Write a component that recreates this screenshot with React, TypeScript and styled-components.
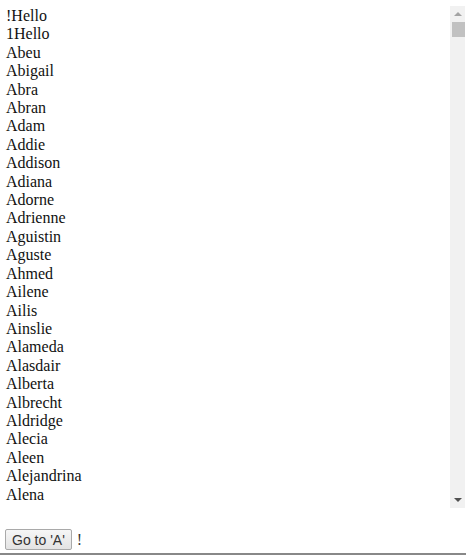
import React from 'react'
import styled, { createGlobalStyle } from 'styled-components'

const GlobalStyle = createGlobalStyle`
    html, body {
        margin: 0;
        padding: 0;
        background: #fff;
    }
    body {
        font-family: "Liberation Serif", "Times New Roman", serif;
        font-size: 16px;
        color: #000;
    }
`

const Page = styled.div`
    width: 466px;
    padding-top: 6px;
    display: flex;
    flex-direction: column;
`

const ListBox = styled.div`
    display: flex;
    height: 502px;
    padding-right: 1px;
`

const NameList = styled.div`
    flex: 1;
    overflow: hidden;
    padding: 1px 0 0 6px;
    box-sizing: border-box;
`

const NameRow = styled.div`
    line-height: 18.4px;
    white-space: nowrap;
    color: #111;
`

const Scrollbar = styled.div`
    width: 15px;
    background: #f1f1f1;
    display: flex;
    flex-direction: column;
`

const ArrowButton = styled.div`
    height: 16px;
    display: flex;
    align-items: center;
    justify-content: center;
`

const Thumb = styled.div`
    height: 15px;
    margin-left: 2px;
    background: #c1c1c1;
`

const TrackRest = styled.div`
    flex: 1;
`

const Footer = styled.div`
    display: flex;
    align-items: center;
    gap: 5px;
    padding: 21px 0 0 5px;
`

const GoButton = styled.button`
    font-family: "Liberation Sans", Arial, sans-serif;
    font-size: 14px;
    color: #333;
    height: 21px;
    padding: 1px 6px;
    border: 1px solid #a9a9a9;
    border-radius: 2px;
    background: linear-gradient(#f6f6f6, #e3e3e3);
    cursor: pointer;
`

const Bang = styled.span`
    font-size: 16px;
    line-height: 18px;
    color: #333;
`

const BottomRule = styled.div`
    margin-top: 3px;
    height: 2px;
    background: #888;
`

const names = [
    '!Hello', '1Hello', 'Abeu', 'Abigail', 'Abra', 'Abran', 'Adam', 'Addie',
    'Addison', 'Adiana', 'Adorne', 'Adrienne', 'Aguistin', 'Aguste', 'Ahmed',
    'Ailene', 'Ailis', 'Ainslie', 'Alameda', 'Alasdair', 'Alberta', 'Albrecht',
    'Aldridge', 'Alecia', 'Aleen', 'Alejandrina', 'Alena',
]

const Arrow = ({ up, color }: { up?: boolean; color: string }) => (
    <svg width="8" height="4" viewBox="0 0 8 4">
        <polygon points={up ? '4,0 8,4 0,4' : '0,0 8,0 4,4'} fill={color} />
    </svg>
)

const App = () => {
    return (
        <Page>
            <GlobalStyle />
            <ListBox>
                <NameList>
                    {names.map((n, i) => (
                        <NameRow key={i}>{n}</NameRow>
                    ))}
                </NameList>
                <Scrollbar>
                    <ArrowButton><Arrow up color="#a3a3a3" /></ArrowButton>
                    <Thumb />
                    <TrackRest />
                    <ArrowButton><Arrow color="#505050" /></ArrowButton>
                </Scrollbar>
            </ListBox>
            <Footer>
                <GoButton>Go to 'A'</GoButton>
                <Bang>!</Bang>
            </Footer>
            <BottomRule />
        </Page>
    )
}

export default App
